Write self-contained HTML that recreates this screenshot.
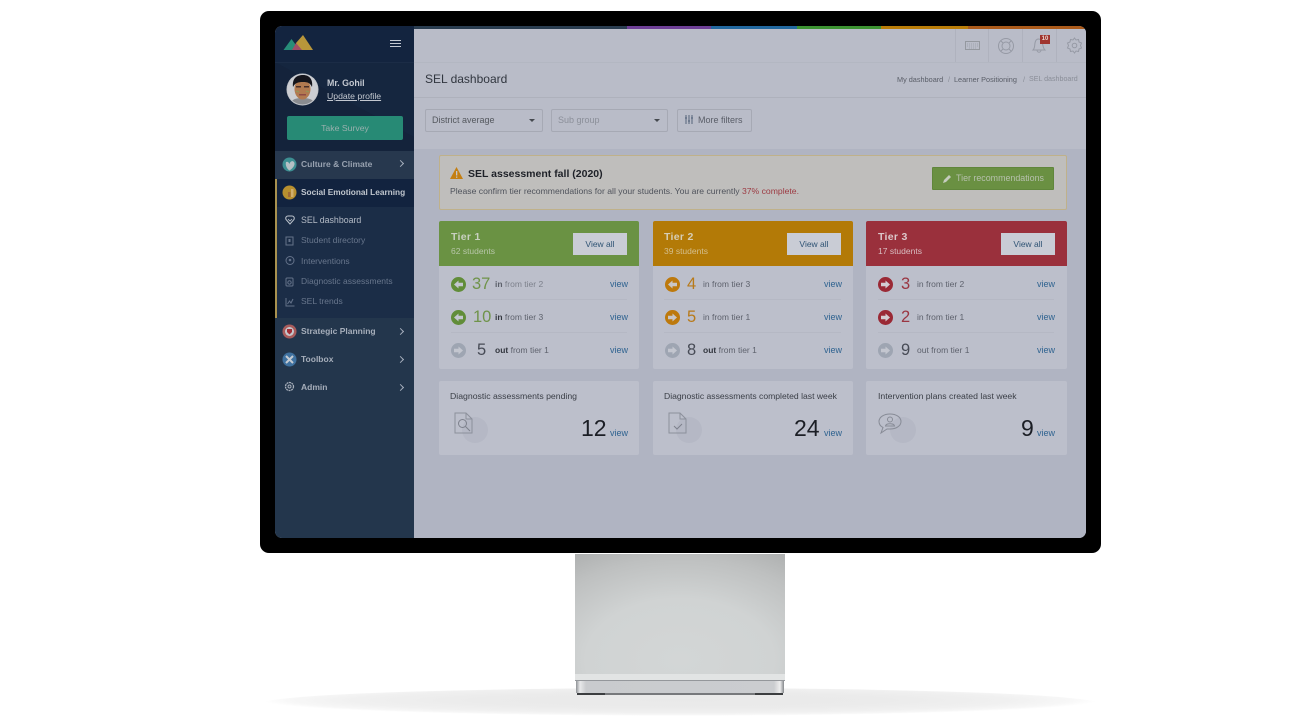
<!DOCTYPE html>
<html><head><meta charset="utf-8"><title>SEL dashboard</title>
<style>
html,body{margin:0;padding:0;background:#fff;width:1311px;height:720px;overflow:hidden}
*{box-sizing:border-box}
body{font-family:"Liberation Sans","Noto Sans CJK JP",sans-serif;position:relative}
.a{position:absolute;white-space:nowrap}
.t{position:absolute;white-space:nowrap;line-height:1}
svg{position:absolute;overflow:visible}
.card{position:absolute;background:#bcbfcb;border-radius:2px}
.hd{position:absolute;left:0;top:0;right:0;height:45px;border-radius:2px 2px 0 0}
.btn{position:absolute;width:54px;height:22px;background:#c9ccd5;color:#2f5374;font-size:8.500px;text-align:center;line-height:22px}
.view{position:absolute;color:#2f6390;font-size:9px;line-height:1}
.sep{position:absolute;height:1px;background:#b5b8c4}
.menu{color:#7f8a9a;font-size:8.500px}
.chev{position:absolute;left:398px;width:5px;height:5px;border-top:1px solid #a5aebb;border-right:1px solid #a5aebb;transform:rotate(45deg)}
.num{font-size:16.500px}
</style></head><body>

<!-- shadow -->
<div class="a" style="left:262px;top:688px;width:836px;height:31px;border-radius:50%;background:radial-gradient(ellipse 50% 50% at 50% 40%,#e9e9e9 0%,#ebebeb 50%,#f0f0f0 78%,#f7f7f7 93%,#fff 100%)"></div>

<!-- stand -->
<div class="a" style="left:575px;top:554px;width:210px;height:120px;background:radial-gradient(ellipse 210px 135px at 50% 88%,#d3d6d6 0%,#d0d3d3 45%,#bec0c0 75%,#a8aaaa 100%)"></div>
<div class="a" style="left:575px;top:674px;width:210px;height:6px;background:#e2e4e4"></div>
<div class="a" style="left:575px;top:680px;width:210px;height:1px;background:#94979b"></div>
<div class="a" style="left:576px;top:681px;width:208px;height:12px;background:linear-gradient(90deg,#8f9296 0,#e8e9ea 4px,#c9cbce 10px,#cbcdd0 198px,#eeeeee 204px,#85888c 208px)"></div>
<div class="a" style="left:577px;top:693px;width:206px;height:2px;background:#77797c"></div>
<div class="a" style="left:577px;top:693px;width:28px;height:2px;background:#3c3e40"></div>
<div class="a" style="left:755px;top:693px;width:28px;height:2px;background:#3c3e40"></div>

<!-- monitor -->
<div class="a" style="left:260px;top:11px;width:841px;height:542px;background:#000;border-radius:9px"></div>

<!-- screen -->
<div class="a" id="screen" style="left:275px;top:26px;width:811px;height:512px;border-radius:7px;overflow:hidden;background:#b0b4c2">

<div style="position:absolute;left:-275px;top:-26px;width:1311px;height:720px;filter:blur(.35px)">

<!-- main background -->
<div class="a" style="left:414px;top:29px;width:672px;height:120px;background:#b9bcc8"></div>
<div class="a" style="left:414px;top:149px;width:672px;height:389px;background:#b0b4c2"></div>
<div class="a" style="left:414px;top:62px;width:672px;height:1px;background:#b3b7c2"></div>
<div class="a" style="left:414px;top:97px;width:672px;height:1px;background:#aeb1bc"></div>

<!-- colour bar -->
<div class="a" style="left:414px;top:26px;width:213px;height:3px;background:#2a3d50"></div>
<div class="a" style="left:627px;top:26px;width:84px;height:3px;background:#6e3f96"></div>
<div class="a" style="left:711px;top:26px;width:86px;height:3px;background:#22689f"></div>
<div class="a" style="left:797px;top:26px;width:84px;height:3px;background:#3d9332"></div>
<div class="a" style="left:881px;top:26px;width:87px;height:3px;background:#ba7d08"></div>
<div class="a" style="left:968px;top:26px;width:118px;height:3px;background:#ab5a1a"></div>

<!-- sidebar -->
<div class="a" style="left:275px;top:26px;width:139px;height:125px;background:#13243f"></div>
<svg style="left:275px;top:62px" width="139" height="89"><polygon points="0,0 0,89 139,89 139,75" fill="#14233b"/><polygon points="0,0 139,75 139,0" fill="#15263f"/></svg>
<div class="a" style="left:275px;top:62px;width:139px;height:1px;background:#1b2c46"></div>
<div class="a" style="left:275px;top:151px;width:139px;height:28px;background:#27384e"></div>
<div class="a" style="left:275px;top:179px;width:139px;height:28px;background:#12233f"></div>
<div class="a" style="left:275px;top:207px;width:139px;height:111px;background:#1b2d47"></div>
<div class="a" style="left:275px;top:318px;width:139px;height:220px;background:#23364c"></div>
<div class="a" style="left:275px;top:179px;width:2px;height:139px;background:#a8914f"></div>

<!-- logo -->
<svg style="left:275px;top:26px" width="60" height="40">
<polygon points="8.500,24 16.500,13 24.500,24" fill="#278d78"/>
<polygon points="17,24 21,17 25,17 30,24" fill="#a04e66"/>
<polygon points="21,17 28,9 38,24 27,24" fill="#b8963a"/>
</svg>
<!-- hamburger -->
<div class="a" style="left:390px;top:40px;width:11px;height:1px;background:#c3c9d2"></div>
<div class="a" style="left:390px;top:43px;width:11px;height:1px;background:#c3c9d2"></div>
<div class="a" style="left:390px;top:46px;width:11px;height:1px;background:#c3c9d2"></div>

<!-- avatar -->
<svg style="left:286px;top:73px" width="33" height="33">
<circle cx="16.500" cy="16.500" r="16" fill="#c4c7cc"/>
<clipPath id="av"><circle cx="16.500" cy="16.500" r="15"/></clipPath>
<g clip-path="url(#av)">
<rect width="33" height="33" fill="#ccced3"/>
<path d="M3 33 C5 26 10 25 16 25 C23 25 28 26 30 33Z" fill="#8a8c90"/>
<ellipse cx="16.500" cy="16" rx="8" ry="10.500" fill="#b27a50"/>
<path d="M7 14 C6 5 11 2 17 2 C24 2 27 7 26 14 C24 10 22 9 17 9 C12 9 9 10 7 14Z" fill="#15151c"/>
<rect x="10" y="13" width="5" height="1.500" fill="#4a2f28"/><rect x="18" y="13" width="5" height="1.500" fill="#4a2f28"/>
<rect x="13" y="21" width="7" height="1.500" fill="#8f4a45"/>
<path d="M10 18 L13 19 M20 18 L23 19" stroke="#8f9a5a" stroke-width="1"/>
</g>
</svg>
<div class="t" style="left:327px;top:79px;color:#c3c8d0;font-size:8.800px;font-weight:bold">Mr. Gohil</div>
<div class="t" style="left:327px;top:92px;color:#c3c8d0;font-size:8.700px;text-decoration:underline">Update profile</div>

<div class="a" style="left:287px;top:116px;width:116px;height:24px;border-radius:2px;background:#278a75;color:#9ab0ae;font-size:8.700px;text-align:center;line-height:24px">Take Survey</div>

<!-- nav -->
<svg style="left:282px;top:157px" width="15" height="15"><circle cx="7.500" cy="7.500" r="7" fill="#3d8f92"/><path d="M4 5 C6 4 7 6 7.500 7 C8 5 10 3 12 5 C14 8 10 12 7.500 13.500 C5 12 3 8 4 5Z" fill="#b6c0c4"/></svg>
<div class="t menu" style="left:301px;top:160px;color:#98a2b0;font-weight:bold">Culture &amp; Climate</div>
<div class="chev" style="top:161px"></div>

<svg style="left:282px;top:185px" width="15" height="15"><circle cx="7.500" cy="7.500" r="7" fill="#b8902f"/><rect x="6" y="7" width="2.500" height="5" fill="#a06a35"/><rect x="9" y="4" width="2.500" height="8" fill="#d0ae6e"/></svg>
<div class="t" style="left:301px;top:188px;color:#c0c6ce;font-size:8.300px;font-weight:bold">Social Emotional Learning</div>

<svg style="left:285px;top:215px" width="10" height="10"><path d="M5 9 L1 4.500 C0 2 2 1 3 1 L7 1 C8 1 10 2 9 4.500Z" fill="none" stroke="#bcc3cc" stroke-width="1"/><path d="M3 4 L5 6 L7 4" fill="none" stroke="#bcc3cc" stroke-width=".8"/></svg>
<div class="t" style="left:301px;top:216px;color:#b4bbc6;font-size:8.800px">SEL dashboard</div>

<svg style="left:285px;top:236px" width="10" height="10"><rect x="1" y="1" width="7" height="8" fill="none" stroke="#64728a" stroke-width="1"/><rect x="3.500" y="3" width="2" height="3" fill="#64728a"/></svg>
<div class="t menu" style="left:301px;top:236px;color:#68768c">Student directory</div>

<svg style="left:285px;top:256px" width="10" height="10"><circle cx="5" cy="4.500" r="4" fill="none" stroke="#64728a"/><circle cx="5" cy="4" r="1.300" fill="#64728a"/></svg>
<div class="t menu" style="left:301px;top:257px;color:#68768c">Interventions</div>

<svg style="left:285px;top:277px" width="10" height="10"><rect x="1" y="1" width="7" height="8" rx="1" fill="none" stroke="#64728a"/><circle cx="4.500" cy="5.500" r="1.700" fill="none" stroke="#64728a"/></svg>
<div class="t menu" style="left:301px;top:277px;color:#68768c">Diagnostic assessments</div>

<svg style="left:285px;top:297px" width="10" height="10"><path d="M1 1 V9 H9.500 M2.500 7 L4.500 4 L6 6 L8 2" fill="none" stroke="#64728a"/></svg>
<div class="t menu" style="left:301px;top:297px;color:#68768c">SEL trends</div>

<svg style="left:282px;top:324px" width="15" height="15"><circle cx="7.500" cy="7.500" r="7" fill="#a85c5c"/><circle cx="7.500" cy="7.500" r="4.500" fill="#c4c7cc"/><path d="M5 5 H10 V8 L7.500 10.500 L5 8Z" fill="#a22f37"/></svg>
<div class="t menu" style="left:301px;top:327px;color:#a6aeba;font-weight:bold">Strategic Planning</div>
<div class="chev" style="top:329px"></div>

<svg style="left:282px;top:352px" width="15" height="15"><circle cx="7.500" cy="7.500" r="7" fill="#3f719f"/><path d="M4 4 L11 11 M11 4 L4 11" stroke="#c5cbd2" stroke-width="2"/></svg>
<div class="t menu" style="left:301px;top:355px;color:#a6aeba;font-weight:bold">Toolbox</div>
<div class="chev" style="top:357px"></div>

<svg style="left:284px;top:381px" width="11" height="11"><circle cx="5.500" cy="5.500" r="4" fill="none" stroke="#a6aeba" stroke-width="1.300" stroke-dasharray="2 .6"/><circle cx="5.500" cy="5.500" r="1.500" fill="none" stroke="#a6aeba"/></svg>
<div class="t menu" style="left:301px;top:383px;color:#a6aeba;font-weight:bold">Admin</div>
<div class="chev" style="top:385px"></div>

<!-- top bar icons -->
<div class="a" style="left:955px;top:29px;width:1px;height:33px;background:#afb2be"></div>
<div class="a" style="left:988px;top:29px;width:1px;height:33px;background:#afb2be"></div>
<div class="a" style="left:1022px;top:29px;width:1px;height:33px;background:#afb2be"></div>
<div class="a" style="left:1056px;top:29px;width:1px;height:33px;background:#afb2be"></div>
<svg style="left:965px;top:41px" width="16" height="10"><rect x=".5" y=".5" width="14" height="8" fill="none" stroke="#94989f"/><path d="M2 3 H13 M2 5 H13 M4 7 H11" stroke="#a0a4ae" stroke-dasharray="1 1"/></svg>
<svg style="left:997px;top:37px" width="18" height="18"><circle cx="9" cy="9" r="7.500" fill="none" stroke="#969aa5"/><circle cx="9" cy="9" r="4" fill="none" stroke="#969aa5"/><path d="M3.500 3.500 L6 6 M14.500 3.500 L12 6 M3.500 14.500 L6 12 M14.500 14.500 L12 12" stroke="#969aa5" stroke-width="1"/></svg>
<svg style="left:1031px;top:36px" width="16" height="18"><path d="M2 14 C4 12 3.500 10 4 7 C4.500 4 6 3 7.500 3 C9 3 11 4 11.500 7 C12 10 12 12 14 14Z M6 14 C6 17 10 17 10 14" fill="none" stroke="#969aa5"/></svg>
<div class="a" style="left:1040px;top:35px;width:10px;height:9px;background:#a03530;color:#e8d8d0;font-size:6px;font-weight:bold;line-height:9px;text-align:center">10</div>
<svg style="left:1066px;top:37px" width="17" height="17"><path d="M8.500 1 L10 3 L12.500 2.500 L13 5 L15.500 6 L14.500 8.500 L15.500 11 L13 12 L12.500 14.500 L10 14 L8.500 16 L7 14 L4.500 14.500 L4 12 L1.500 11 L2.500 8.500 L1.500 6 L4 5 L4.500 2.500 L7 3Z" fill="none" stroke="#969aa5"/><circle cx="8.500" cy="8.500" r="2.300" fill="none" stroke="#969aa5"/></svg>

<!-- page header -->
<div class="t" style="left:425px;top:73px;color:#31363f;font-size:12px">SEL dashboard</div>
<div class="t" style="left:897px;top:76px;color:#5a5e68;font-size:7.300px">My dashboard</div>
<div class="t" style="left:948px;top:76px;color:#8a8e98;font-size:7.300px">/</div>
<div class="t" style="left:954px;top:76px;color:#5a5e68;font-size:7.300px">Learner Positioning</div>
<div class="t" style="left:1023px;top:76px;color:#8a8e98;font-size:7.300px">/</div>
<div class="t" style="left:1029px;top:76px;color:#8a8e98;font-size:7.100px">SEL dashboard</div>

<!-- filters -->
<div class="a" style="left:425px;top:109px;width:118px;height:23px;border:1px solid #a6a9b4;border-radius:2px"></div>
<div class="t" style="left:432px;top:116px;color:#55595f;font-size:9px">District average</div>
<div class="a" style="left:529px;top:119px;border-left:3px solid transparent;border-right:3px solid transparent;border-top:3px solid #45494f"></div>
<div class="a" style="left:551px;top:109px;width:117px;height:23px;border:1px solid #a6a9b4;border-radius:2px"></div>
<div class="t" style="left:558px;top:116px;color:#8b8f99;font-size:9px">Sub group</div>
<div class="a" style="left:654px;top:119px;border-left:3px solid transparent;border-right:3px solid transparent;border-top:3px solid #45494f"></div>
<div class="a" style="left:677px;top:109px;width:75px;height:23px;border:1px solid #a6a9b4;border-radius:2px"></div>
<svg style="left:685px;top:115px" width="9" height="10"><path d="M1 0 V9 M4 0 V9 M7 0 V9" stroke="#55647a"/><path d="M0 3 H2 M3 6 H5 M6 3 H8" stroke="#55647a"/></svg>
<div class="t" style="left:698px;top:116px;color:#5a5e68;font-size:9px">More filters</div>

<!-- alert -->
<div class="a" style="left:439px;top:155px;width:628px;height:55px;background:#bfbebc;border:1px solid #bfb18a;border-radius:2px"></div>
<svg style="left:450px;top:167px" width="13" height="12"><polygon points="6.500,0 13,12 0,12" fill="#c47f12"/><rect x="6" y="4" width="1.300" height="4.500" fill="#c5c6c9"/><rect x="6" y="9.500" width="1.300" height="1.300" fill="#c5c6c9"/></svg>
<div class="t" style="left:468px;top:169px;color:#1e2128;font-size:10.500px;font-weight:bold">SEL assessment fall (2020)</div>
<div class="t" style="left:450px;top:187px;color:#4f535c;font-size:8.650px">Please confirm tier recommendations for all your students. You are currently <span style="color:#9c3a42">37% complete.</span></div>
<div class="a" style="left:932px;top:167px;width:122px;height:23px;background:#6a9042;border:1px solid #60863b;border-radius:1px"></div>
<svg style="left:943px;top:174px" width="9" height="9"><path d="M0 9 L1 6 L6 1 L8 3 L3 8Z" fill="#c5ccbe"/></svg>
<div class="t" style="left:956px;top:174px;color:#b6c0ac;font-size:8.900px">Tier recommendations</div>

<!-- tier 1 -->
<div class="card" style="left:439px;top:221px;width:200px;height:148px">
  <div class="hd" style="background:#6a9243"></div>
  <div class="t" style="left:12px;top:11px;color:#c8d0c0;font-size:10.500px;font-weight:bold;letter-spacing:.3px">Tier 1</div>
  <div class="t" style="left:12px;top:26px;color:#b7c6a8;font-size:8.500px">62 students</div>
  <div class="btn" style="left:134px;top:12px">View all</div>
  <div class="sep" style="left:12px;top:78px;width:176px"></div>
  <div class="sep" style="left:12px;top:111px;width:176px"></div>
  <div class="view" style="left:171px;top:59px">view</div>
  <div class="view" style="left:171px;top:92px">view</div>
  <div class="view" style="left:171px;top:125px">view</div>
</div>
<!-- tier 2 -->
<div class="card" style="left:653px;top:221px;width:200px;height:148px">
  <div class="hd" style="background:#b37a07"></div>
  <div class="t" style="left:11px;top:11px;color:#d6cdb6;font-size:10.500px;font-weight:bold;letter-spacing:.3px">Tier 2</div>
  <div class="t" style="left:11px;top:26px;color:#d4bf8e;font-size:8.500px">39 students</div>
  <div class="btn" style="left:134px;top:12px">View all</div>
  <div class="sep" style="left:11px;top:78px;width:177px"></div>
  <div class="sep" style="left:11px;top:111px;width:177px"></div>
  <div class="view" style="left:171px;top:59px">view</div>
  <div class="view" style="left:171px;top:92px">view</div>
  <div class="view" style="left:171px;top:125px">view</div>
</div>
<!-- tier 3 -->
<div class="card" style="left:866px;top:221px;width:201px;height:148px">
  <div class="hd" style="background:#9a303c"></div>
  <div class="t" style="left:12px;top:11px;color:#dcc8cb;font-size:10.500px;font-weight:bold;letter-spacing:.3px">Tier 3</div>
  <div class="t" style="left:12px;top:26px;color:#d8bdc1;font-size:8.500px">17 students</div>
  <div class="btn" style="left:135px;top:12px">View all</div>
  <div class="sep" style="left:12px;top:78px;width:176px"></div>
  <div class="sep" style="left:12px;top:111px;width:176px"></div>
  <div class="view" style="left:171px;top:59px">view</div>
  <div class="view" style="left:171px;top:92px">view</div>
  <div class="view" style="left:171px;top:125px">view</div>
</div>

<!-- arrows: tier 1 -->
<svg style="left:450.500px;top:276.500px" width="15" height="15"><circle cx="7.500" cy="7.500" r="7.500" fill="#618d39"/><path d="M3 7.500 L7.500 3.500 V5.800 H12 V9.200 H7.500 V11.500Z" fill="#c3c6cf"/></svg>
<svg style="left:450.500px;top:309.500px" width="15" height="15"><circle cx="7.500" cy="7.500" r="7.500" fill="#618d39"/><path d="M3 7.500 L7.500 3.500 V5.800 H12 V9.200 H7.500 V11.500Z" fill="#c3c6cf"/></svg>
<svg style="left:450.500px;top:342.500px" width="15" height="15"><circle cx="7.500" cy="7.500" r="7.500" fill="#9ea5b2"/><path d="M12 7.500 L7.500 3.500 V5.800 H3 V9.200 H7.500 V11.500Z" fill="#c3c6cf"/></svg>
<!-- arrows: tier 2 -->
<svg style="left:664.500px;top:276.500px" width="15" height="15"><circle cx="7.500" cy="7.500" r="7.500" fill="#bd790c"/><path d="M3 7.500 L7.500 3.500 V5.800 H12 V9.200 H7.500 V11.500Z" fill="#c9c6c6"/></svg>
<svg style="left:664.500px;top:309.500px" width="15" height="15"><circle cx="7.500" cy="7.500" r="7.500" fill="#bd790c"/><path d="M12 7.500 L7.500 3.500 V5.800 H3 V9.200 H7.500 V11.500Z" fill="#c9c6c6"/></svg>
<svg style="left:664.500px;top:342.500px" width="15" height="15"><circle cx="7.500" cy="7.500" r="7.500" fill="#9ea5b2"/><path d="M12 7.500 L7.500 3.500 V5.800 H3 V9.200 H7.500 V11.500Z" fill="#c3c6cf"/></svg>
<!-- arrows: tier 3 -->
<svg style="left:878px;top:276.500px" width="15" height="15"><circle cx="7.500" cy="7.500" r="7.500" fill="#9a2935"/><path d="M12 7.500 L7.500 3.500 V5.800 H3 V9.200 H7.500 V11.500Z" fill="#d3cdd2"/></svg>
<svg style="left:878px;top:309.500px" width="15" height="15"><circle cx="7.500" cy="7.500" r="7.500" fill="#9a2935"/><path d="M12 7.500 L7.500 3.500 V5.800 H3 V9.200 H7.500 V11.500Z" fill="#d3cdd2"/></svg>
<svg style="left:878px;top:342.500px" width="15" height="15"><circle cx="7.500" cy="7.500" r="7.500" fill="#9ea5b2"/><path d="M12 7.500 L7.500 3.500 V5.800 H3 V9.200 H7.500 V11.500Z" fill="#c3c6cf"/></svg>

<!-- counts -->
<div class="t num" style="left:472px;top:276px;color:#6f934a">37</div>
<div class="t num" style="left:473px;top:309px;color:#6f934a">10</div>
<div class="t num" style="left:477px;top:342px;color:#474b56">5</div>
<div class="t num" style="left:687px;top:276px;color:#b87a1a">4</div>
<div class="t num" style="left:687px;top:309px;color:#b87a1a">5</div>
<div class="t num" style="left:687px;top:342px;color:#474b56">8</div>
<div class="t num" style="left:901px;top:276px;color:#9a3642">3</div>
<div class="t num" style="left:901px;top:309px;color:#9a3642">2</div>
<div class="t num" style="left:901px;top:342px;color:#474b56">9</div>

<!-- row labels -->
<div class="t" style="left:495px;top:280px;color:#7d818c;font-size:8.500px"><b style="color:#5b5f6a">in</b> from tier 2</div>
<div class="t" style="left:495px;top:313px;color:#5e626d;font-size:8.500px"><b style="color:#33373f">in</b> from tier 3</div>
<div class="t" style="left:495px;top:346px;color:#5e626d;font-size:8.500px"><b style="color:#33373f">out</b> from tier 1</div>
<div class="t" style="left:703px;top:280px;color:#5e626d;font-size:8.500px">in from tier 3</div>
<div class="t" style="left:703px;top:313px;color:#5e626d;font-size:8.500px">in from tier 1</div>
<div class="t" style="left:703px;top:346px;color:#5e626d;font-size:8.500px"><b style="color:#33373f">out</b> from tier 1</div>
<div class="t" style="left:917px;top:280px;color:#5e626d;font-size:8.500px">in from tier 2</div>
<div class="t" style="left:917px;top:313px;color:#5e626d;font-size:8.500px">in from tier 1</div>
<div class="t" style="left:917px;top:346px;color:#5e626d;font-size:8.500px">out from tier 1</div>

<!-- bottom cards -->
<div class="card" style="left:439px;top:381px;width:200px;height:74px">
  <div class="t" style="left:11px;top:11px;color:#3a3e46;font-size:8.700px">Diagnostic assessments pending</div>
  <div style="position:absolute;left:23px;top:36px;width:26px;height:26px;border-radius:50%;background:#b5b8c5"></div>
  <svg style="left:15px;top:31px" width="20" height="24"><path d="M1 1 H12 L18 7 V21 H1Z M12 1 V7 H18" fill="none" stroke="#8c909b"/><circle cx="8.500" cy="11.500" r="4" fill="none" stroke="#7d818c"/><path d="M11.500 14.500 L16 19" stroke="#7d818c"/></svg>
  <div class="t" style="left:142px;top:35.500px;color:#1b1e25;font-size:23px">12</div>
  <div class="view" style="left:171px;top:48px">view</div>
</div>
<div class="card" style="left:653px;top:381px;width:200px;height:74px">
  <div class="t" style="left:11px;top:11px;color:#3a3e46;font-size:8.600px">Diagnostic assessments completed last week</div>
  <div style="position:absolute;left:23px;top:36px;width:26px;height:26px;border-radius:50%;background:#b5b8c5"></div>
  <svg style="left:15px;top:31px" width="20" height="24"><path d="M1 1 H12 L18 7 V21 H1Z M12 1 V7 H18" fill="none" stroke="#8c909b"/><path d="M6 14 L9 17 L14 12" fill="none" stroke="#7d818c"/></svg>
  <div class="t" style="left:141px;top:35.500px;color:#1b1e25;font-size:23px">24</div>
  <div class="view" style="left:171px;top:48px">view</div>
</div>
<div class="card" style="left:866px;top:381px;width:201px;height:74px">
  <div class="t" style="left:12px;top:11px;color:#3a3e46;font-size:8.700px">Intervention plans created last week</div>
  <div style="position:absolute;left:24px;top:36px;width:26px;height:26px;border-radius:50%;background:#b5b8c5"></div>
  <svg style="left:12px;top:32px" width="24" height="22"><path d="M12 1 C18 1 23 4 23 8.500 C23 13 18 16 12 16 L9 16 L3 20 L5 14.500 C2 13 1 11 1 8.500 C1 4 6 1 12 1Z" fill="none" stroke="#878b96"/><circle cx="12" cy="6.500" r="2.500" fill="none" stroke="#878b96"/><path d="M7.500 13 C8 10 16 10 16.500 13Z" fill="none" stroke="#878b96"/></svg>
  <div class="t" style="left:155px;top:35.500px;color:#1b1e25;font-size:23px">9</div>
  <div class="view" style="left:171px;top:48px">view</div>
</div>

</div>
</div>
</body></html>
